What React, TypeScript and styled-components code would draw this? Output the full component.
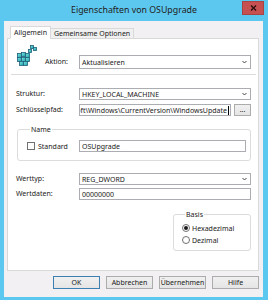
import styled, { createGlobalStyle } from "styled-components";

const GlobalStyle = createGlobalStyle`
  html, body {
    margin: 0;
    padding: 0;
  }
  body {
    background: #5cc7ef;
    font-family: "Noto Sans", "Open Sans", sans-serif;
    font-size: 7px;
    color: #1a1a1a;
  }
  * {
    box-sizing: border-box;
  }
`;

const Window = styled.div`
  width: 268px;
  height: 300px;
  background: #5cc7ef;
  display: flex;
  flex-direction: column;
  padding: 0 5px 3px 4px;
`;

const TitleBar = styled.div`
  height: 21px;
  display: grid;
  grid-template-columns: 1fr auto 1fr;
  margin-right: -1px;
`;

const Title = styled.div`
  grid-column: 2;
  font-size: 8.8px;
  color: #222;
  line-height: 21px;
  padding-bottom: 2px;
  white-space: nowrap;
`;

const CloseButton = styled.div`
  justify-self: end;
  width: 22px;
  height: 14px;
  margin-top: 1px;
  background: #c75050;
  border: 1px solid #a84444;
  display: flex;
  align-items: center;
  justify-content: center;
`;

const Client = styled.div`
  flex: 1;
  background: #f3f0f4;
  display: flex;
  flex-direction: column;
  padding: 5px 4px 8px 3px;
`;

const Tabs = styled.div`
  display: flex;
  align-items: flex-end;
  padding-left: 3px;
  margin-bottom: -1px;
  position: relative;
  z-index: 1;
`;

const Tab = styled.div<{ $active?: boolean }>`
  height: ${(p) => (p.$active ? 13 : 11)}px;
  padding: 0 3px;
  border: 1px solid #d9d9d9;
  border-bottom-color: ${(p) => (p.$active ? "#fff" : "#d9d9d9")};
  margin-left: ${(p) => (p.$active ? 0 : -1)}px;
  background: ${(p) => (p.$active ? "#fff" : "#f0f0f0")};
  line-height: ${(p) => (p.$active ? 11 : 9)}px;
  white-space: nowrap;
`;

const Panel = styled.div`
  flex: 1;
  min-width: 0;
  background: #fff;
  border: 1px solid #d9d9d9;
  display: flex;
  flex-direction: column;
  padding: 0 7px 0 8px;
`;

const Row = styled.div<{ $top?: number }>`
  display: grid;
  grid-template-columns: 63px minmax(0, 1fr);
  align-items: center;
  margin-top: ${(p) => p.$top ?? 0}px;
`;

const HeaderCell = styled.div`
  display: flex;
  align-items: flex-end;
  gap: 8px;
`;

const IconBox = styled.div`
  width: 21px;
  height: 21px;
  margin-bottom: 3px;
`;

const Label = styled.span<{ $lh?: number }>`
  line-height: ${(p) => p.$lh ?? 12}px;
  white-space: nowrap;
`;

const Separator = styled.div`
  height: 1px;
  background: #dcdcdc;
  margin: 5px -5px 0 -5px;
`;

const Box = styled.div<{ $h?: number }>`
  height: ${(p) => p.$h ?? 12}px;
  min-width: 0;
  border: 1px solid #abadb3;
  background: #fff;
  display: flex;
  align-items: center;
  padding: 0 2px;
  white-space: nowrap;
  overflow: hidden;
`;

const SelectBox = styled(Box)`
  justify-content: space-between;
  padding-right: 3px;
  align-self: end;
`;

const PathRow = styled.div`
  display: flex;
  gap: 3px;
  min-width: 0;
`;

const PathField = styled(Box)`
  flex: 1;
  justify-content: flex-end;
  padding: 0 1px 0 0;
  & > span:first-child {
    flex-shrink: 0;
  }
`;

const Caret = styled.span`
  width: 1px;
  height: 9px;
  background: #000;
  margin-left: 1px;
  flex-shrink: 0;
`;

const SmallButton = styled.div`
  width: 17px;
  height: 12px;
  flex-shrink: 0;
  border: 1px solid #acacac;
  background: linear-gradient(#f0f0f0, #e5e5e5);
  display: flex;
  align-items: center;
  justify-content: center;
  line-height: 1;
  padding-bottom: 2px;
`;

const Group = styled.fieldset<{ $top?: number }>`
  margin: ${(p) => p.$top ?? 0}px 0 0 0;
  border: 1px solid #dcdcdc;
  border-radius: 3px;
  min-inline-size: 0;
`;

const NameGroup = styled(Group)`
  margin-left: 1px;
  padding: 6px 4px 8px 9px;
`;

const BasisGroup = styled(Group)`
  align-self: flex-end;
  width: 78px;
  padding: 3px 4px 4px 8px;
`;

const Legend = styled.legend`
  padding: 0 1px;
  margin-left: 3px;
  line-height: 9px;
`;

const NameRow = styled.div`
  display: grid;
  grid-template-columns: 52px minmax(0, 1fr);
  align-items: center;
`;

const CheckLabel = styled.label`
  display: flex;
  align-items: center;
  gap: 3px;
`;

const CheckBox = styled.span`
  width: 8px;
  height: 8px;
  border: 1px solid #707070;
  background: #fff;
`;

const RadioLine = styled.div`
  display: flex;
  align-items: center;
  gap: 2px;
  height: 12px;
`;

const Radio = styled.span<{ $on?: boolean }>`
  width: 8px;
  height: 8px;
  border-radius: 50%;
  border: 1px solid #707070;
  background: #fff;
  display: flex;
  align-items: center;
  justify-content: center;
  &::after {
    content: "";
    width: 4px;
    height: 4px;
    border-radius: 50%;
    background: ${(p) => (p.$on ? "#1a1a1a" : "transparent")};
  }
`;

const ButtonBar = styled.div`
  display: flex;
  justify-content: flex-end;
  gap: 6px;
  margin-top: 5px;
`;

const DialogButton = styled.div<{ $default?: boolean }>`
  width: 47px;
  height: 13px;
  border: 1px solid ${(p) => (p.$default ? "#3c7fb1" : "#acacac")};
  background: linear-gradient(#f0f0f0, #e5e5e5);
  display: flex;
  align-items: center;
  justify-content: center;
  white-space: nowrap;
`;

const Chevron = () => (
  <svg width="5" height="4" viewBox="0 0 5 4">
    <path d="M0.5 1 L2.5 3 L4.5 1" fill="none" stroke="#333" strokeWidth="0.9" />
  </svg>
);

const RegistryIcon = () => (
  <svg width="21" height="21" viewBox="0 0 21 21">
    <defs>
      <linearGradient id="cube" x1="0" y1="0" x2="1" y2="1">
        <stop offset="0" stopColor="#7fe6e0" />
        <stop offset="1" stopColor="#1a9fa6" />
      </linearGradient>
    </defs>
    {[
      [14, 0, 3],
      [17, 2, 3],
      [12, 4, 3],
      [1, 8, 4],
      [5, 7, 4],
      [9, 8, 4],
      [1, 12, 4],
      [5, 12, 4],
      [9, 12, 4],
      [3, 16, 4],
      [7, 16, 4],
    ].map(([x, y, s], i) => (
      <rect
        key={i}
        x={x + 0.5}
        y={y + 0.5}
        width={s}
        height={s}
        fill="url(#cube)"
        stroke="#1d5f7c"
        strokeWidth="0.8"
      />
    ))}
  </svg>
);

export default function App() {
  return (
    <>
      <GlobalStyle />
      <Window>
        <TitleBar>
          <Title>Eigenschaften von OSUpgrade</Title>
          <CloseButton>
            <svg width="7" height="6" viewBox="0 0 7 6">
              <path d="M1 0.5 L6 5.5 M6 0.5 L1 5.5" stroke="#2a1010" strokeWidth="1.4" />
            </svg>
          </CloseButton>
        </TitleBar>
        <Client>
          <Tabs>
            <Tab $active>Allgemein</Tab>
            <Tab>Gemeinsame Optionen</Tab>
          </Tabs>
          <Panel>
            <Row $top={6}>
              <HeaderCell>
                <IconBox>
                  <RegistryIcon />
                </IconBox>
                <Label $lh={14}>Aktion:</Label>
              </HeaderCell>
              <SelectBox $h={14}>
                <span>Aktualisieren</span>
                <Chevron />
              </SelectBox>
            </Row>
            <Separator />
            <Row $top={13}>
              <Label>Struktur:</Label>
              <SelectBox>
                <span>HKEY_LOCAL_MACHINE</span>
                <Chevron />
              </SelectBox>
            </Row>
            <Row $top={4}>
              <Label>Schlüsselpfad:</Label>
              <PathRow>
                <PathField>
                  <span>soft\Windows\CurrentVersion\WindowsUpdate</span>
                  <Caret />
                </PathField>
                <SmallButton>...</SmallButton>
              </PathRow>
            </Row>
            <NameGroup $top={9}>
              <Legend>Name</Legend>
              <NameRow>
                <CheckLabel>
                  <CheckBox />
                  <span>Standard</span>
                </CheckLabel>
                <Box>OSUpgrade</Box>
              </NameRow>
            </NameGroup>
            <Row $top={12}>
              <Label>Werttyp:</Label>
              <SelectBox>
                <span>REG_DWORD</span>
                <Chevron />
              </SelectBox>
            </Row>
            <Row $top={3}>
              <Label>Wertdaten:</Label>
              <Box>00000000</Box>
            </Row>
            <BasisGroup $top={10}>
              <Legend>Basis</Legend>
              <RadioLine>
                <Radio $on />
                <span>Hexadezimal</span>
              </RadioLine>
              <RadioLine>
                <Radio />
                <span>Dezimal</span>
              </RadioLine>
            </BasisGroup>
          </Panel>
          <ButtonBar>
            <DialogButton $default>OK</DialogButton>
            <DialogButton>Abbrechen</DialogButton>
            <DialogButton>Übernehmen</DialogButton>
            <DialogButton>Hilfe</DialogButton>
          </ButtonBar>
        </Client>
      </Window>
    </>
  );
}
